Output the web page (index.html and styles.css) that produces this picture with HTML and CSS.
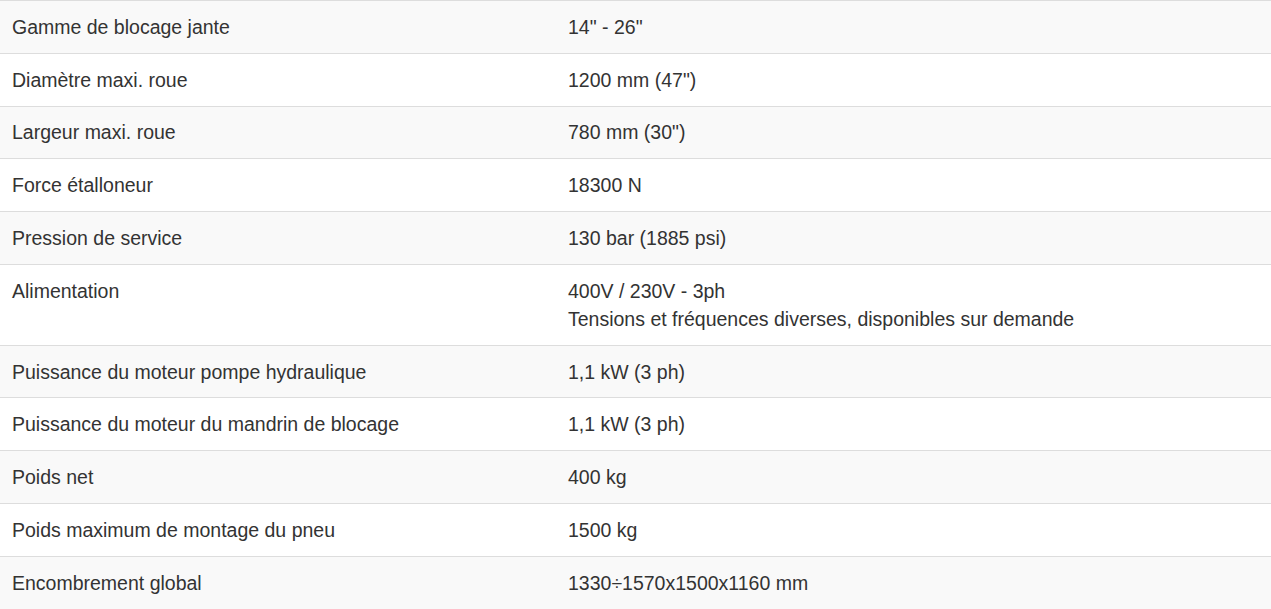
FILE: index.html
```html
<!DOCTYPE html>
<html lang="fr">
<head>
<meta charset="utf-8">
<title>Caractéristiques techniques</title>
<link rel="stylesheet" href="styles.css">
</head>
<body>
<table class="specs">
  <colgroup><col class="col-label"><col class="col-value"></colgroup>
  <tbody>
    <tr><td>Gamme de blocage jante</td><td>14" - 26"</td></tr>
    <tr><td>Diamètre maxi. roue</td><td>1200 mm (47")</td></tr>
    <tr><td>Largeur maxi. roue</td><td>780 mm (30")</td></tr>
    <tr><td>Force étalloneur</td><td>18300 N</td></tr>
    <tr><td>Pression de service</td><td>130 bar (1885 psi)</td></tr>
    <tr><td>Alimentation</td><td>400V / 230V - 3ph<br>Tensions et fréquences diverses, disponibles sur demande</td></tr>
    <tr><td>Puissance du moteur pompe hydraulique</td><td>1,1 kW (3 ph)</td></tr>
    <tr><td>Puissance du moteur du mandrin de blocage</td><td>1,1 kW (3 ph)</td></tr>
    <tr><td>Poids net</td><td>400 kg</td></tr>
    <tr><td>Poids maximum de montage du pneu</td><td>1500 kg</td></tr>
    <tr><td>Encombrement global</td><td>1330÷1570x1500x1160 mm</td></tr>
  </tbody>
</table>
</body>
</html>
```
FILE: styles.css
```css
html, body {
  margin: 0;
  padding: 0;
  background: #fff;
}
body {
  font-family: "Liberation Sans", Arial, sans-serif;
  font-size: 19.5px;
  line-height: 28px;
  color: #333;
}
.specs {
  width: 100%;
  border-collapse: collapse;
  border-spacing: 0;
  table-layout: fixed;
}
.col-label { width: 556px; }
.specs td {
  padding: 11.9px 12px;
  border-top: 1px solid #ddd;
  vertical-align: top;
  text-align: left;
}
.specs tr:nth-child(odd) td {
  background: #f9f9f9;
}
```
